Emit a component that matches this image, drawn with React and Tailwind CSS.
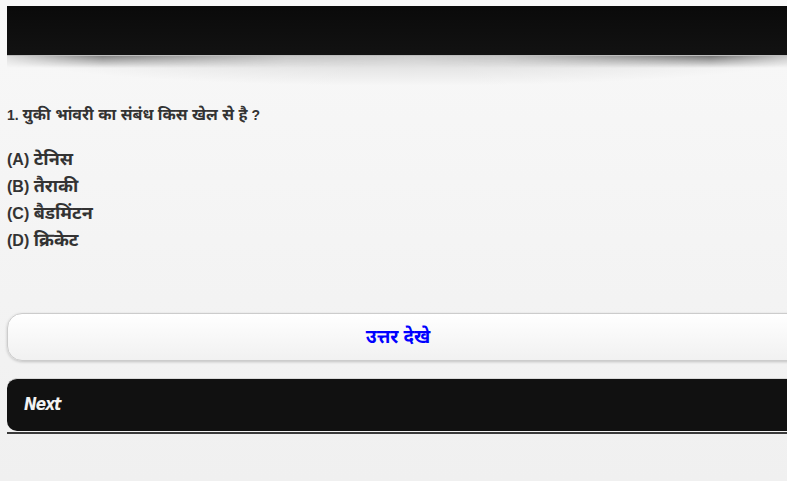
export default function App() {
  const options = [
    ["(A)", "टेनिस"],
    ["(B)", "तैराकी"],
    ["(C)", "बैडमिंटन"],
    ["(D)", "क्रिकेट"],
  ];
  return (
    <div
      className="min-h-[481px] w-full overflow-hidden bg-[linear-gradient(to_bottom,#f8f8f8,#f0f0f0)] pt-[6px] pl-[7px] text-[#333]"
      style={{ fontFamily: '"Liberation Sans", "Noto Sans Devanagari", Arial, sans-serif' }}
    >
      <div className="relative w-[800px]">
        <div className="h-[50px] border-b border-[#bdbdbd] bg-[linear-gradient(to_bottom,#0a0a0a,#121212)]" />
        <div className="h-[30px] bg-[radial-gradient(ellipse_50%_100%_at_50%_0%,rgba(0,0,0,0.12),rgba(0,0,0,0)_100%)]">
          <div className="h-[12px] bg-[linear-gradient(to_right,rgba(0,0,0,0.1),rgba(0,0,0,0.45)_12%,rgba(0,0,0,0.12)_35%,rgba(0,0,0,0.05)_50%,rgba(0,0,0,0.12)_62%,rgba(0,0,0,0.5)_88%,rgba(0,0,0,0.1))] [mask-image:linear-gradient(to_bottom,black,transparent)]" />
        </div>
      </div>

      <div className="mt-[20px] h-[18px] text-[14px] font-bold leading-[18px]">
        1. <span className="text-[16px]">युकी भांवरी का संबंध किस खेल से है</span> ?
      </div>

      <div className="mt-[22px] flex flex-col text-[16px] font-bold">
        {options.map(([k, v]) => (
          <div key={k} className="h-[27px] leading-[27px]">
            {k} <span className="text-[18px]">{v}</span>
          </div>
        ))}
      </div>

      <div className="mt-[59px] flex h-[48px] w-[800px] items-center justify-center rounded-[15px] border border-[#cccccc] bg-[linear-gradient(to_bottom,#ffffff,#f1f1f1)] pr-[18px] shadow-[0_1px_3px_rgba(0,0,0,0.2)]">
        <span className="text-[18.5px] font-bold leading-[20px] text-[#0000ff]">उत्तर देखे</span>
      </div>

      <div className="mt-[17px] w-[800px]">
        <div className="flex h-[53px] items-center rounded-[10px] border-t border-[#d8d8d8] bg-[#111111] pl-[17px]">
          <span
            className="text-[17px] font-bold italic tracking-[-1px] text-[#f2f2f2]"
            style={{ fontFamily: '"DejaVu Sans Condensed", sans-serif' }}
          >
            Next
          </span>
        </div>
        <div className="mt-[1px] h-[2px] bg-[#3a3a3a]" />
      </div>
    </div>
  );
}
